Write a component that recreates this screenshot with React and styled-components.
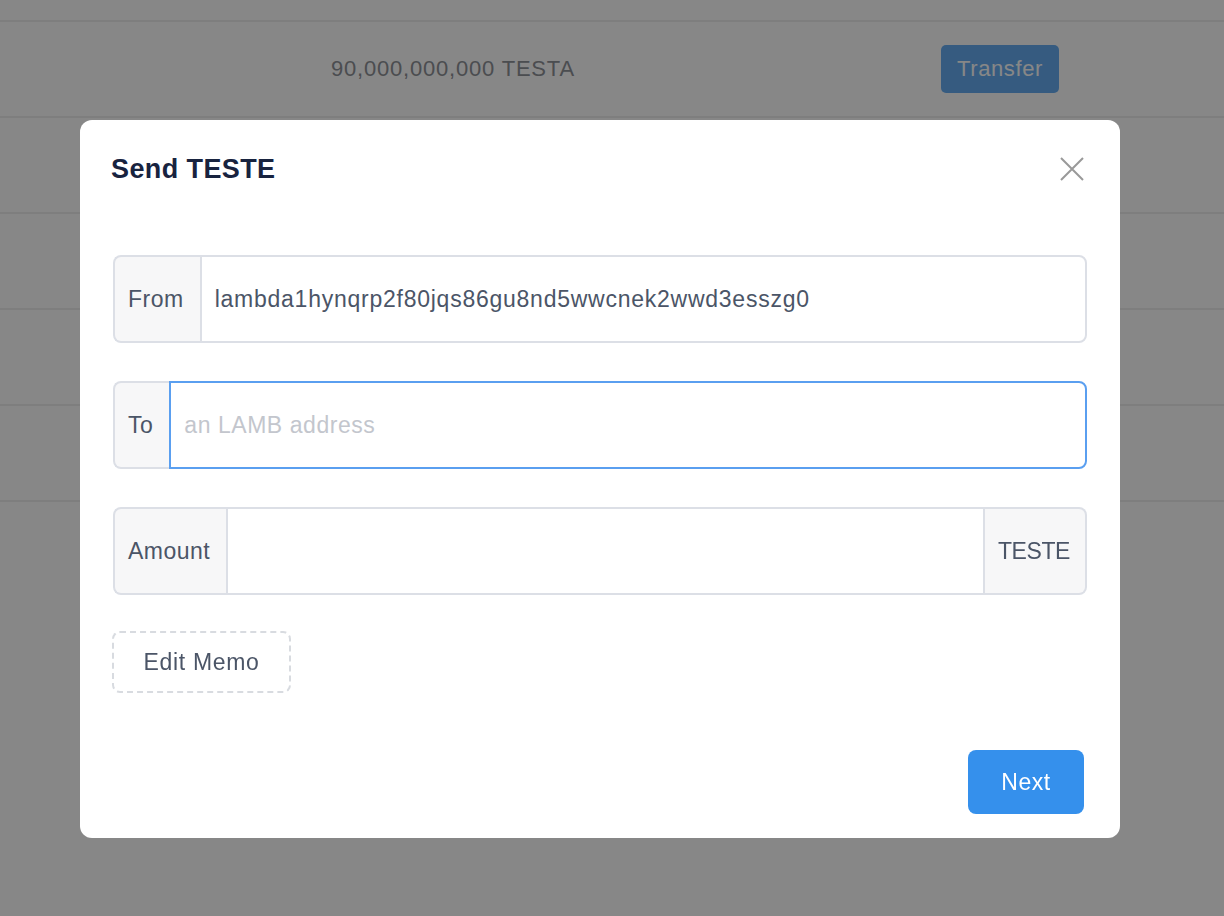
import React, { useState } from 'react';
import styled, { createGlobalStyle, css } from 'styled-components';

const GlobalStyle = createGlobalStyle`
  html, body {
    margin: 0;
    padding: 0;
    background: #ffffff;
    font-family: "Liberation Sans", Arial, sans-serif;
  }
  * { box-sizing: border-box; }
`;

const Page = styled.div`
  width: 1224px;
  height: 916px;
  overflow: hidden;
`;

const TopRow = styled.div`
  height: 22px;
  border-bottom: 2px solid #eeeeee;
`;

const Row = styled.div`
  height: 96px;
  display: flex;
  align-items: center;
  border-bottom: 2px solid #eeeeee;
  padding-left: 331px;
  padding-right: 165px;
`;

const Balance = styled.span`
  font-size: 22px;
  letter-spacing: 0.8px;
  color: #8e9198;
`;

const TransferButton = styled.button`
  margin-left: auto;
  width: 118px;
  height: 48px;
  border: none;
  border-radius: 5px;
  background: #66adf2;
  color: #ffffff;
  font-family: inherit;
  font-size: 22px;
  letter-spacing: 0.6px;
`;

const Overlay = styled.div`
  position: fixed;
  inset: 0;
  background: rgba(0, 0, 0, 0.47);
  padding: 120px 0 0 80px;
`;

const Modal = styled.div`
  width: 1040px;
  background: #ffffff;
  border-radius: 12px;
  display: flex;
  flex-direction: column;
`;

const Header = styled.div`
  display: flex;
  align-items: center;
  justify-content: space-between;
  padding: 33px 36px 0 31px;
`;

const Title = styled.h2`
  margin: 0;
  font-size: 27px;
  line-height: 32px;
  font-weight: 700;
  letter-spacing: 0.4px;
  color: #18233f;
`;

const CloseButton = styled.button`
  width: 24px;
  height: 24px;
  padding: 0;
  border: none;
  background: none;
  cursor: pointer;
  display: flex;
`;

const Body = styled.div`
  display: flex;
  flex-direction: column;
  gap: 38px;
  padding: 70px 33px 0 33px;
`;

const Group = styled.div`
  display: flex;
  height: 88px;
`;

const Addon = styled.div`
  display: flex;
  align-items: center;
  padding: ${(p) => (p.$caps ? '0 15px 0 13px' : '0 16px 0 13px')};
  background: #f7f7f8;
  border: 2px solid #dcdfe6;
  font-size: 23px;
  letter-spacing: ${(p) => (p.$caps ? '-0.4px' : '0.5px')};
  color: #4b5567;
  ${(p) =>
    p.$side === 'left'
      ? css`
          border-right: none;
          border-radius: 8px 0 0 8px;
        `
      : css`
          border-left: none;
          border-radius: 0 8px 8px 0;
        `}
`;

const Input = styled.input`
  flex: 1;
  min-width: 0;
  height: 100%;
  border: 2px solid #dcdfe6;
  border-radius: ${(p) => (p.$append ? '0' : '0 8px 8px 0')};
  padding: 0 13px;
  font-family: inherit;
  font-size: 23px;
  letter-spacing: 0.75px;
  color: #4b5567;
  outline: none;
  background: #ffffff;
  ${(p) =>
    p.$active &&
    css`
      border-color: #5a9ff0;
    `}

  &::placeholder {
    color: #c3c6cd;
    letter-spacing: 0.55px;
  }
`;

const MemoButton = styled.button`
  align-self: flex-start;
  margin-top: -2px;
  margin-left: -1px;
  width: 179px;
  height: 62px;
  border: 2px dashed #d8dbe0;
  border-radius: 8px;
  background: #ffffff;
  font-family: inherit;
  font-size: 23px;
  letter-spacing: 0.65px;
  color: #4b5567;
  cursor: pointer;
`;

const Footer = styled.div`
  display: flex;
  justify-content: flex-end;
  padding: 57px 36px 24px 32px;
`;

const NextButton = styled.button`
  width: 116px;
  height: 64px;
  border: none;
  border-radius: 8px;
  background: #3590ec;
  color: #ffffff;
  font-family: inherit;
  font-size: 23px;
  letter-spacing: 0.5px;
  cursor: pointer;
`;

const CloseIcon = () => (
  <svg width="24" height="24" viewBox="0 0 24 24" fill="none">
    <path d="M1 1L23 23M23 1L1 23" stroke="#999999" strokeWidth="2" />
  </svg>
);

export default function App() {
  const [to, setTo] = useState('');
  const [amount, setAmount] = useState('');

  return (
    <Page>
      <GlobalStyle />
      <TopRow />
      <Row>
        <Balance>90,000,000,000 TESTA</Balance>
        <TransferButton>Transfer</TransferButton>
      </Row>
      <Row />
      <Row />
      <Row />
      <Row />

      <Overlay>
        <Modal>
          <Header>
            <Title>Send TESTE</Title>
            <CloseButton aria-label="Close">
              <CloseIcon />
            </CloseButton>
          </Header>
          <Body>
            <Group>
              <Addon $side="left">From</Addon>
              <Input readOnly value="lambda1hynqrp2f80jqs86gu8nd5wwcnek2wwd3esszg0" />
            </Group>
            <Group>
              <Addon $side="left">To</Addon>
              <Input
                $active
                placeholder="an LAMB address"
                value={to}
                onChange={(e) => setTo(e.target.value)}
              />
            </Group>
            <Group>
              <Addon $side="left">Amount</Addon>
              <Input $append value={amount} onChange={(e) => setAmount(e.target.value)} />
              <Addon $side="right" $caps>TESTE</Addon>
            </Group>
            <MemoButton>Edit Memo</MemoButton>
          </Body>
          <Footer>
            <NextButton>Next</NextButton>
          </Footer>
        </Modal>
      </Overlay>
    </Page>
  );
}
